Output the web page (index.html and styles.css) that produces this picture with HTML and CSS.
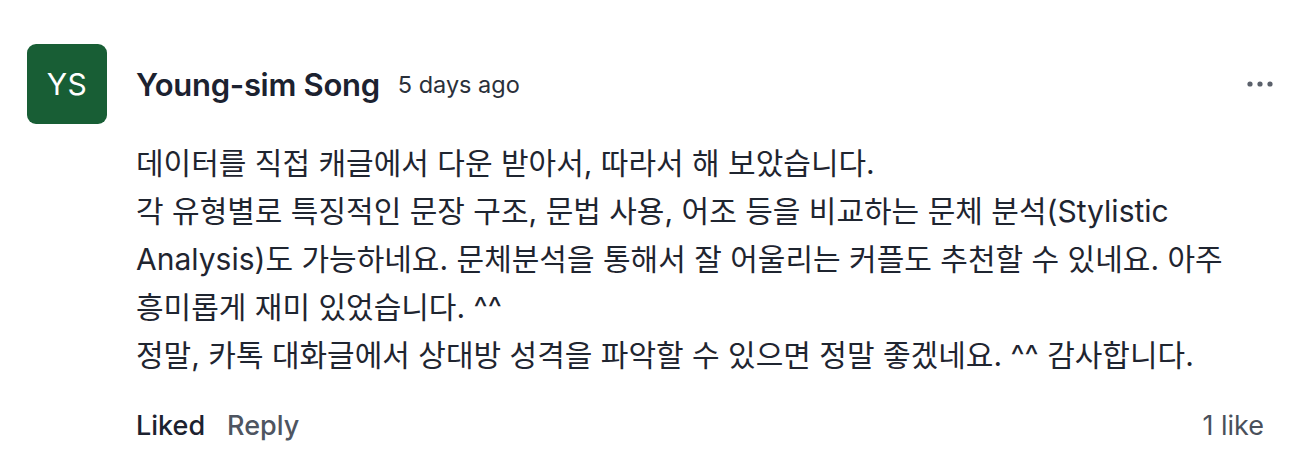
FILE: index.html
```html
<!DOCTYPE html>
<html lang="ko">
<head>
<meta charset="utf-8">
<link rel="stylesheet" href="styles.css">
</head>
<body>
<div class="comment">
  <div class="avatar">YS</div>
  <div class="main">
    <div class="header">
      <span class="name">Young-sim Song</span>
      <span class="time">5 days ago</span>
      <span class="spacer"></span>
      <svg class="more" width="28" height="8" viewBox="0 0 28 8"><circle cx="4" cy="4" r="2.6" fill="#5b616b"/><circle cx="14" cy="4" r="2.6" fill="#5b616b"/><circle cx="24" cy="4" r="2.6" fill="#5b616b"/></svg>
    </div>
    <div class="body">
      <p>데이터를 직접 캐글에서 다운 받아서, 따라서 해 보았습니다.</p>
      <p>각 유형별로 특징적인 문장 구조, 문법 사용, 어조 등을 비교하는 문체 분석(Stylistic Analysis)도 가능하네요. 문체분석을 통해서 잘 어울리는 커플도 추천할 수 있네요. 아주 흥미롭게 재미 있었습니다. ^^</p>
      <p>정말, 카톡 대화글에서 상대방 성격을 파악할 수 있으면 정말 좋겠네요. ^^ 감사합니다.</p>
    </div>
    <div class="footer">
      <span class="liked">Liked</span>
      <span class="reply">Reply</span>
      <span class="spacer"></span>
      <span class="likes">1 like</span>
    </div>
  </div>
</div>
</body>
</html>
```
FILE: styles.css
```css
* { box-sizing: border-box; }
html, body { margin: 0; padding: 0; background: #fff; }
body {
  font-family: Inter, "Noto Sans CJK KR", sans-serif;
  color: #1c2230;
}
.comment {
  display: flex;
  gap: 29px;
  padding: 44px 36px 0 27px;
}
.avatar {
  flex: 0 0 80px;
  width: 80px;
  height: 80px;
  border-radius: 9px;
  background: #185e35;
  color: #fff;
  font-size: 30px;
  display: flex;
  align-items: center;
  justify-content: center;
  letter-spacing: 0.5px;
}
.main { flex: 1; min-width: 0; }
.header {
  display: flex;
  align-items: center;
  height: 80px;
}
.name {
  font-size: 31px;
  font-weight: 600;
  letter-spacing: -0.3px;
  color: #1c2230;
}
.time {
  font-size: 23.5px;
  color: #2a303a;
  margin-left: 18px;
}
.spacer { flex: 1; }
.more { margin-right: -4px; }
.body {
  margin-top: 15px;
  font-size: 30px;
  line-height: 48px;
  color: #1f2530;
  word-break: keep-all;
}
.body p { margin: 0; }
.footer {
  display: flex;
  align-items: center;
  line-height: 32px;
  margin-top: 31px;
  font-size: 27px;
}
.liked { color: #1c2230; font-weight: 500; }
.reply { color: #4e5561; margin-left: 22px; font-weight: 500; }
.likes { color: #4a505b; margin-right: 6px; }
```
